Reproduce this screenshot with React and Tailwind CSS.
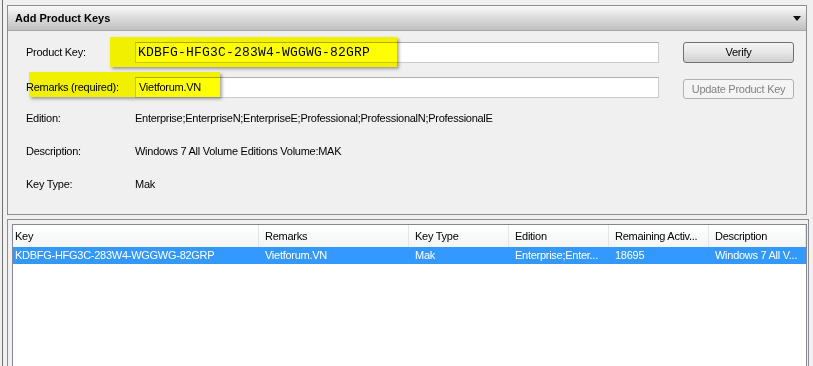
import React from 'react';

const font = { fontFamily: '"Liberation Sans", Arial, sans-serif' };

const columns = [
    { label: 'Key', width: 'w-[246px]', pad: 'pl-[2px]' },
    { label: 'Remarks', width: 'w-[150px]', pad: 'pl-[6px]' },
    { label: 'Key Type', width: 'w-[100px]', pad: 'pl-[6px]' },
    { label: 'Edition', width: 'w-[100px]', pad: 'pl-[6px]' },
    { label: 'Remaining Activ...', width: 'w-[100px]', pad: 'pl-[6px]' },
    { label: 'Description', width: 'w-[97px]', pad: 'pl-[6px]' },
];

const row = [
    'KDBFG-HFG3C-283W4-WGGWG-82GRP',
    'Vietforum.VN',
    'Mak',
    'Enterprise;Enter...',
    '18695',
    'Windows 7 All V...',
];

const InfoRow = ({ label, value }) => (
    <div className="flex items-center h-[33px]">
        <span className="w-[127px] pl-[18px] shrink-0">{label}</span>
        <span>{value}</span>
    </div>
);

const App = () => {
    return (
        <div className="w-[813px] h-[366px] bg-[#f0f0f0] overflow-hidden text-[11px] tracking-[-0.27px] text-black" style={font}>
            <div className="ml-[2px] h-[366px] border-l border-[#707070] pl-[4px] pt-[5px]">

                {/* Add Product Keys panel */}
                <div className="relative w-[800px] h-[210px] border border-[#8d8d8d] bg-[#f0f0f0]">
                    <div className="h-[25px] flex items-center justify-between pl-[7px] pr-[5px] pt-[1px] bg-linear-to-b from-[#fafafa] to-[#bfbfbf] border-b border-[#a8a8a8]">
                        <span className="font-bold tracking-normal">Add Product Keys</span>
                        <svg width="8" height="5" viewBox="0 0 8 5"><path d="M0 0h8L4 5z" fill="#111" /></svg>
                    </div>

                    <div className="pt-[11px]">
                        <div className="flex items-center h-[21px]">
                            <span className="w-[127px] pl-[18px] shrink-0">Product Key:</span>
                            <div className="w-[524px] h-[21px] bg-white border border-[#c8cbd0] border-t-[#abadb3] flex items-center pl-[2px] text-[13px] tracking-[0.2px]" style={{ fontFamily: '"Liberation Mono", "Courier New", monospace' }}>
                                KDBFG-HFG3C-283W4-WGGWG-82GRP
                            </div>
                            <button className="ml-[24px] w-[111px] h-[21px] rounded-[3px] border border-[#707070] bg-linear-to-b from-[#f4f4f4] via-[#e6e6e6] to-[#cfcfcf]">
                                Verify
                            </button>
                        </div>

                        <div className="flex items-start h-[21px] mt-[14px]">
                            <span className="w-[127px] pl-[18px] shrink-0 self-center">Remarks (required):</span>
                            <div className="w-[524px] h-[21px] bg-white border border-[#c8cbd0] border-t-[#abadb3] flex items-center pl-[3px]">
                                Vietforum.VN
                            </div>
                            <button className="ml-[24px] mt-[2px] w-[111px] h-[20px] rounded-[3px] border border-[#adb2b5] bg-[#f4f4f4] text-[#838383]">
                                Update Product Key
                            </button>
                        </div>

                        <div className="mt-[4px]">
                            <InfoRow label="Edition:" value="Enterprise;EnterpriseN;EnterpriseE;Professional;ProfessionalN;ProfessionalE" />
                            <InfoRow label="Description:" value="Windows 7 All Volume Editions Volume:MAK" />
                            <InfoRow label="Key Type:" value="Mak" />
                        </div>
                    </div>

                    {/* highlighter marks */}
                    <div className="absolute left-[102px] top-[31px] w-[287px] h-[30px] bg-[#ffff00] mix-blend-multiply shadow-[2px_2px_3px_rgba(0,0,0,0.35)]" />
                    <div className="absolute left-[21px] top-[66px] w-[191px] h-[25px] bg-[#ffff00] mix-blend-multiply shadow-[2px_2px_3px_rgba(0,0,0,0.35)]" />
                </div>

                {/* Key list */}
                <div className="mt-[4px] w-[802px] h-[180px] border border-[#8d8d8d] pt-[4px] pl-[4px] pr-[1px]">
                    <div className="h-[200px] bg-white border border-[#828790] overflow-hidden">
                        <div className="flex h-[22px] bg-linear-to-b from-white to-[#f3f4f5]">
                            {columns.map((c) => (
                                <div key={c.label} className={`${c.width} ${c.pad} flex items-center border-r border-[#e5e5e5] shrink-0`}>
                                    {c.label}
                                </div>
                            ))}
                        </div>
                        <div className="flex h-[17px] bg-[#3399ff] text-white">
                            {row.map((v, i) => (
                                <div key={i} className={`${columns[i].width} ${columns[i].pad} flex items-center shrink-0 border-r border-transparent`}>
                                    {v}
                                </div>
                            ))}
                        </div>
                    </div>
                </div>
            </div>
        </div>
    );
};

export default App;
